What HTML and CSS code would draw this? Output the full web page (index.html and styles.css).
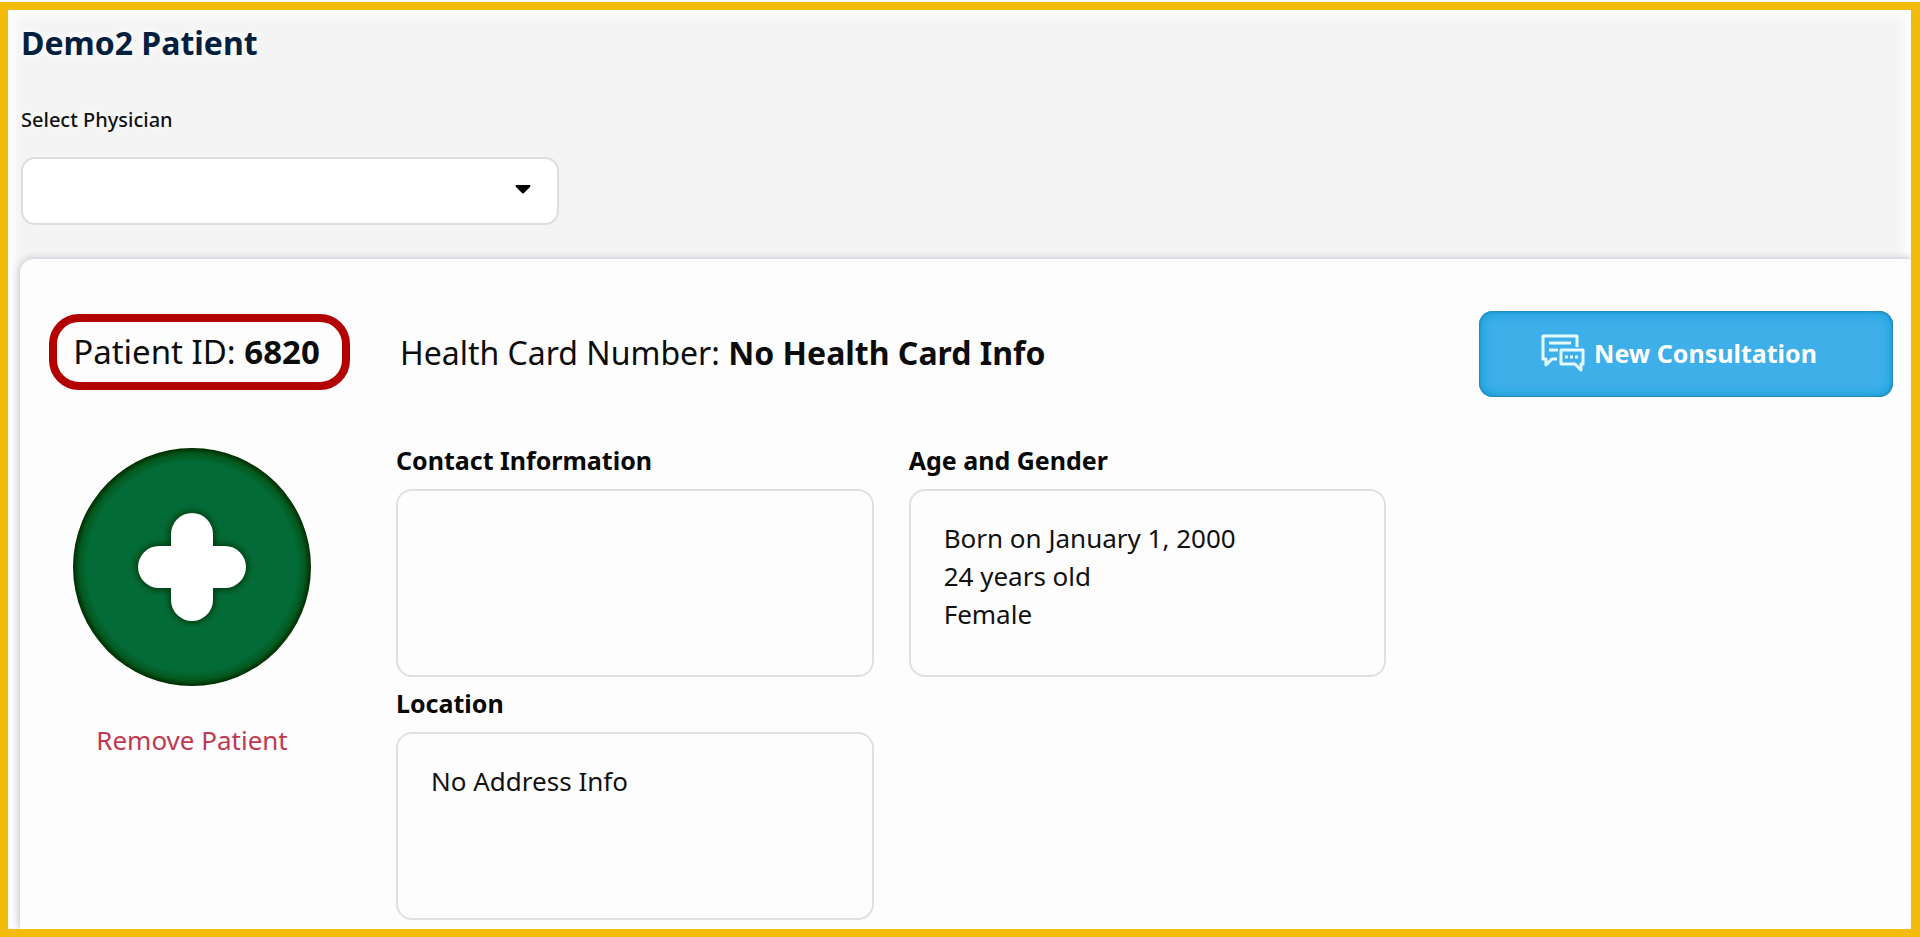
FILE: index.html
```html
<!DOCTYPE html>
<html lang="en">
<head>
<meta charset="utf-8">
<title>Demo2 Patient</title>
<link rel="stylesheet" href="styles.css">
</head>
<body>
<div class="frame">
  <header class="top">
    <h1 class="title">Demo2 Patient</h1>
    <label class="field-label" for="physician">Select Physician</label>
    <div class="select-wrap">
      <select id="physician" class="select"><option></option></select>
      <svg class="caret" viewBox="0 0 16 9" aria-hidden="true"><path d="M1 0h14q1 1 0 2L9 8q-1 1-2 0L1 2q-1-1 0-2z"/></svg>
    </div>
  </header>
  <main class="card">
    <div class="summary">
      <p class="patient-id">Patient ID: <strong>6820</strong></p>
      <p class="health">Health Card Number: <strong>No Health Card Info</strong></p>
      <button class="consult" type="button">
        <svg class="chat" viewBox="0 0 44 38" aria-hidden="true">
          <path d="M36 13V2H2v23h3v6l6-6h5M8 9h22M8 16h9"/>
          <path d="M20 16h22v14h-2v6l-6-6H20z"/>
          <path d="M24 23h3M29 23h3M34 23h3"/>
        </svg>
        <span>New Consultation</span>
      </button>
    </div>
    <div class="body">
      <aside class="profile">
        <svg class="avatar" viewBox="0 0 240 240" role="img" aria-label="Patient avatar">
          <defs>
            <radialGradient id="disc">
              <stop offset="0.88" stop-color="#036b38"/>
              <stop offset="0.95" stop-color="#03591f"/>
              <stop offset="1" stop-color="#002c00"/>
            </radialGradient>
            <filter id="soft" x="-20%" y="-20%" width="140%" height="140%"><feGaussianBlur stdDeviation="3"/></filter>
          </defs>
          <circle cx="120" cy="120" r="119" fill="url(#disc)"/>
          <g fill="#003a08" filter="url(#soft)"><rect x="97" y="64" width="46" height="112" rx="23"/><rect x="64" y="97" width="112" height="46" rx="23"/></g>
          <g fill="#fff"><rect x="99" y="66" width="42" height="108" rx="21"/><rect x="66" y="99" width="108" height="42" rx="21"/></g>
        </svg>
        <button class="remove" type="button">Remove Patient</button>
      </aside>
      <div class="details">
        <section>
          <h2 class="heading">Contact Information</h2>
          <div class="box"></div>
        </section>
        <section>
          <h2 class="heading">Age and Gender</h2>
          <div class="box"><p>Born on January 1, 2000</p><p>24 years old</p><p>Female</p></div>
        </section>
        <section class="row-start">
          <h2 class="heading">Location</h2>
          <div class="box"><p>No Address Info</p></div>
        </section>
      </div>
    </div>
  </main>
</div>
</body>
</html>
```
FILE: styles.css
```css
* { box-sizing: border-box; }
html { background: #fff; }
body {
  margin: 0;
  padding-top: 2px;
  min-height: 100vh;
  display: flex;
  font-family: "Noto Sans", "Open Sans", sans-serif;
  font-size: 26px;
  color: #111;
}
h1, h2, p { margin: 0; }
.frame {
  flex: 1;
  display: flex;
  flex-direction: column;
  border: 8px solid #f3bb0a;
  border-right-width: 9px;
  background: #f4f4f4;
  box-shadow: inset 0 0 12px 6px #fff;
  overflow: hidden;
}
.top { padding: 9px 13px 34px; }
.title {
  font-size: 32px;
  line-height: 48px;
  color: #04203f;
  text-shadow: 0 0 6px #fff, 0 0 10px #fff;
}
.field-label {
  display: block;
  margin: 38px 0 22px;
  font-size: 20px;
  font-weight: 500;
  line-height: 30px;
  text-shadow: 0 0 6px #fff, 0 0 10px #fff;
}
.select-wrap { position: relative; max-width: 538px; }
.select {
  display: block;
  width: 100%;
  height: 68px;
  padding: 0 60px 0 20px;
  border: 2px solid #ddd;
  border-radius: 14px;
  background: #fff;
  appearance: none;
  font: inherit;
}
.caret {
  position: absolute;
  right: 28px;
  top: 28px;
  width: 16px;
  height: 9px;
  pointer-events: none;
}
.card {
  flex: 1;
  margin-left: 12px;
  padding: 52px 0 8px 29px;
  border-radius: 14px 0 0 0;
  background: #fdfdfd;
  box-shadow: 0 0 7px 1px #c4c6d0;
}
.summary, .body {
  display: grid;
  grid-template-columns: 301px 1fr;
  column-gap: 46px;
}
.summary {
  grid-template-columns: 301px 1fr auto;
  align-items: center;
  padding-right: 18px;
  font-size: 32px;
  color: #0c0c0c;
}
.patient-id {
  margin-bottom: 4px;
  padding-right: 6px;
  border: 8px solid #b30000;
  border-radius: 30px;
  font-size: 33px;
  line-height: 60px;
  text-align: center;
  white-space: nowrap;
}
.health { padding: 0 0 4px 4px; }
.consult {
  display: flex;
  align-items: center;
  justify-content: center;
  gap: 9px;
  width: 414px;
  height: 86px;
  padding: 0 18px 2px 4px;
  border: 0;
  border-radius: 14px;
  background: #3eafe8;
  box-shadow: inset 0 0 2px 1px #2583b4, inset 0 0 12px 2px #119fdc;
  color: #fff;
  font: 700 25px "Noto Sans", "Open Sans", sans-serif;
}
.chat {
  width: 44px;
  height: 38px;
  fill: none;
  stroke: #e4fbff;
  stroke-width: 3;
  stroke-linejoin: round;
}
.body { margin-top: 41px; }
.profile {
  display: flex;
  flex-direction: column;
  align-items: center;
  padding: 9px 15px 0 0;
}
.avatar { width: 240px; height: 240px; }
.remove {
  margin-top: 34px;
  padding: 0;
  border: 0;
  background: none;
  color: #c0394f;
  font: inherit;
  line-height: 38px;
}
.details {
  display: grid;
  grid-template-columns: repeat(3, 1fr);
  column-gap: 35px;
  row-gap: 7px;
  padding: 3px 12px 0 0;
}
.row-start { grid-column: 1; }
.heading {
  margin-bottom: 10px;
  font-size: 25px;
  line-height: 38px;
  color: #080808;
}
.box {
  min-height: 188px;
  padding: 28px 33px;
  border: 2px solid #e0e0e2;
  border-radius: 16px;
  line-height: 38px;
}
```
